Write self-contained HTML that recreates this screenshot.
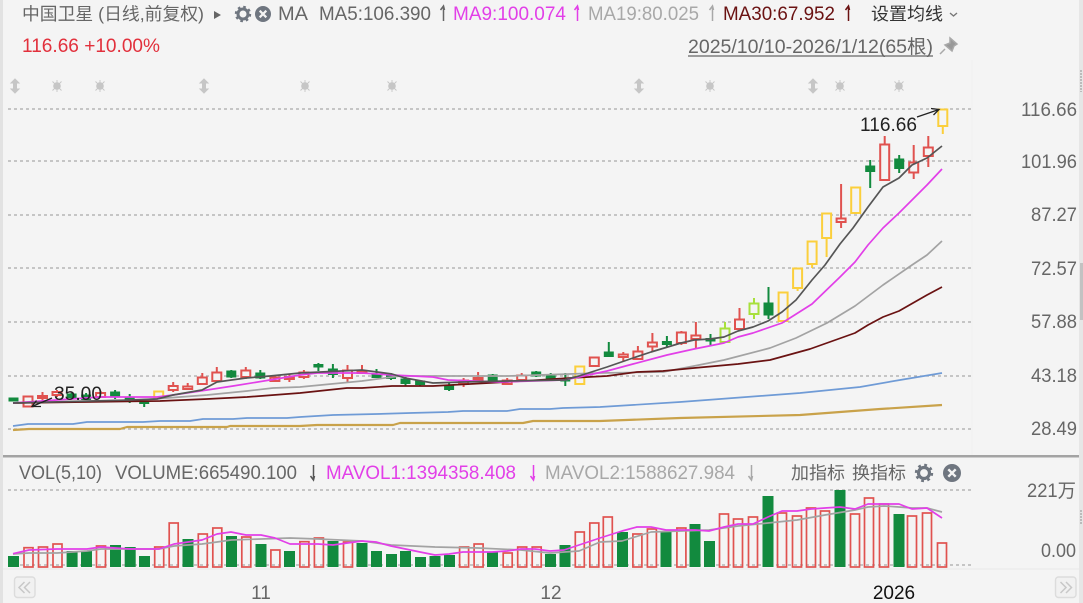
<!DOCTYPE html>
<html><head><meta charset="utf-8"><style>
html,body{margin:0;padding:0;width:1083px;height:603px;overflow:hidden;background:#f4f4f4}
svg{display:block}
text{font-family:"Liberation Sans","Noto Sans CJK SC",sans-serif;font-size:19px}
.cj{font-size:17.5px}
.g{fill:#128a3e;stroke:#128a3e;stroke-width:2}
.r{fill:#f4f4f4;stroke:#e0524f;stroke-width:2}
.y{fill:#f4f4f4;stroke:#fbcf3c;stroke-width:2}
.l{fill:#f4f4f4;stroke:#a8e03c;stroke-width:2}
.w{fill:none;stroke-width:2}
.ln{fill:none;stroke-width:1.700;stroke-linejoin:round}
.ax{fill:#666}
.ar{fill:none;stroke-width:1.500}
</style></head><body>
<svg width="1083" height="603" viewBox="0 0 1083 603" xmlns="http://www.w3.org/2000/svg">
<rect width="1083" height="603" fill="#f4f4f4"/>
<rect x="0" y="0" width="3" height="603" fill="#e2e2e2"/>
<rect x="1079" y="0" width="4" height="603" fill="#e6e6e6"/>
<rect x="1080" y="263" width="3" height="57" fill="#c2c2c2"/>
<path d="M1081 70v22M1081 510v14" stroke="#bbb" stroke-width="2" stroke-dasharray="2 1"/>
<path d="M972 60V455" stroke="#efefef"/>

<!-- grid -->
<g stroke="#a9a9a9" stroke-width="1.300" stroke-dasharray="3 3" fill="none">
<path d="M8 109H973M8 161H973M8 215H973M8 268H973M8 322H973M8 376H973M8 429H973M8 490H973M8 565H973"/>
</g>
<path d="M3 569H1079" stroke="#e8e8e8"/>
<rect x="3" y="455" width="1076" height="2.500" fill="#a3a3a3"/>

<!-- header -->
<text class="cj" x="22" y="20" fill="#666" textLength="182" lengthAdjust="spacingAndGlyphs">中国卫星 (日线,前复权)</text>
<path d="M214 11l7 4-7 4z" fill="#666"/>
<circle cx="243" cy="14" r="5" fill="none" stroke="#6f7680" stroke-width="3"/>
<circle cx="243" cy="14" r="7" fill="none" stroke="#6f7680" stroke-width="2.400" stroke-dasharray="2.600 2.900"/>
<circle cx="263" cy="14" r="8" fill="#6f7680"/>
<path d="M259.700 10.700l6.600 6.600M266.300 10.700l-6.600 6.600" stroke="#f4f4f4" stroke-width="2.200"/>
<text x="278" y="20" fill="#666" textLength="30" lengthAdjust="spacingAndGlyphs">MA</text>
<text x="319" y="20" fill="#666" textLength="112" lengthAdjust="spacingAndGlyphs">MA5:106.390</text>
<path class="ar" stroke="#666" d="M443.500 21V6M440.500 10l3-4 1 4"/>
<text x="453" y="20" fill="#e23fe8" textLength="113" lengthAdjust="spacingAndGlyphs">MA9:100.074</text>
<path class="ar" stroke="#e23fe8" d="M577.500 21V6M574.500 10l3-4 1 4"/>
<text x="588" y="20" fill="#a8a8a8" textLength="111" lengthAdjust="spacingAndGlyphs">MA19:80.025</text>
<path class="ar" stroke="#a8a8a8" d="M712.500 21V6M709.500 10l3-4 1 4"/>
<text x="723" y="20" fill="#6a1212" textLength="112" lengthAdjust="spacingAndGlyphs">MA30:67.952</text>
<path class="ar" stroke="#6a1212" d="M848.500 21V6M845.500 10l3-4 1 4"/>
<text class="cj" x="871" y="20" fill="#333" textLength="72" lengthAdjust="spacingAndGlyphs">设置均线</text>
<path d="M950 13l3.500 3 3.500-3" fill="none" stroke="#777" stroke-width="1.400"/>

<text x="22" y="52" fill="#e2303c" textLength="138" lengthAdjust="spacingAndGlyphs">116.66 +10.00%</text>
<text x="688" y="53" fill="#666" textLength="245" lengthAdjust="spacingAndGlyphs">2025/10/10-2026/1/12(65根)</text>
<path d="M688 56H933" stroke="#666" stroke-width="1.200"/>
<path d="M950 38l7 6-3 2-2 5-7-6 5-2zM945 49l-5 5" fill="#999" stroke="#a9a9a9" stroke-width="1.500"/>

<!-- markers -->
<g fill="#c6c6c6" stroke="#c6c6c6">
<path d="M15 79l4 4h-2.500v6h2.500l-4 4-4-4h2.500v-6h-2.500z"/>
<path d="M204 79l4 4h-2.500v6h2.500l-4 4-4-4h2.500v-6h-2.500z"/>
<path d="M639 79l4 4h-2.500v6h2.500l-4 4-4-4h2.500v-6h-2.500z"/>
<path d="M813 79l4 4h-2.500v6h2.500l-4 4-4-4h2.500v-6h-2.500z"/>
<g stroke="none">
<circle cx="57" cy="86" r="3.800"/><circle cx="100" cy="86" r="3.800"/><circle cx="305" cy="86" r="3.800"/><circle cx="392" cy="86" r="3.800"/><circle cx="710" cy="86" r="3.800"/><circle cx="840" cy="86" r="3.800"/><circle cx="899" cy="86" r="3.800"/>
</g>
<path fill="none" stroke-width="0.900" d="M52.500 81.500l9 9M61.500 81.500l-9 9M57 80v12M95.500 81.500l9 9M104.500 81.500l-9 9M100 80v12M300.500 81.500l9 9M309.500 81.500l-9 9M305 80v12M387.500 81.500l9 9M396.500 81.500l-9 9M392 80v12M705.500 81.500l9 9M714.500 81.500l-9 9M710 80v12M835.500 81.500l9 9M844.500 81.500l-9 9M840 80v12M894.500 81.500l9 9M903.500 81.500l-9 9M899 80v12"/>
</g>

<!-- wicks -->
<path class="w" stroke="#128a3e" d="M71.600 393v6M86.100 393v7M115.100 390v9M129.700 394v9M144.200 400v7M231.300 370v8M260.300 370v9M318.400 363v8M332.900 364v14M376.500 369v8M391 373v7M405.500 377v9M420.100 380v6M449.100 382v9M492.700 374v7M536.200 371v6M550.700 373v7M565.300 373v13M608.800 342v15M666.900 336v11M710.500 334v12M768.500 287v32M870.200 160v28M899.200 155v18"/>
<path class="w" stroke="#e0524f" d="M42.500 392v10M57 390v7M100.600 391v7M173.200 382v10M187.700 383v7M202.300 373v12M216.800 367v15M245.800 367v12M274.900 375v7M289.400 374v8M303.900 370v9M347.500 365v17M362 365v9M463.600 378v9M478.100 372v9M507.200 378v7M521.700 373v8M594.300 357v10M623.300 352v9M637.900 346v14M652.400 333v19M681.400 331v14M695.900 322v27M739.500 308v21M841.100 184v44M884.700 136v44M913.700 145v34M928.300 136v31"/>
<path class="w" stroke="#fbcf3c" d="M797.600 288v3M812.100 264v4M826.600 238v19M942.800 126v8"/>
<path class="w" stroke="#a8e03c" d="M725 322v20M754 298v21"/>

<!-- candle bodies -->
<g class="g">
<rect x="9.500" y="398.500" width="8" height="2"/><rect x="67.600" y="394.500" width="8" height="2.500"/><rect x="82.100" y="395.500" width="8" height="3.500"/><rect x="111.100" y="392.500" width="8" height="3.500"/><rect x="125.700" y="398" width="8" height="1"/><rect x="140.200" y="401.500" width="8" height="1.500"/><rect x="227.300" y="371.500" width="8" height="5"/><rect x="256.300" y="373.500" width="8" height="4"/><rect x="314.400" y="365" width="8" height="1.500"/><rect x="328.900" y="369.500" width="8" height="4.500"/><rect x="372.500" y="374.500" width="8" height="2.500"/><rect x="387" y="376.500" width="8" height="1.500"/><rect x="401.500" y="379.500" width="8" height="3.500"/><rect x="416.100" y="381.500" width="8" height="2.500"/><rect x="445.100" y="385.500" width="8" height="3.500"/><rect x="488.700" y="375.500" width="8" height="4.500"/><rect x="532.200" y="372.500" width="8" height="3"/><rect x="546.700" y="376.500" width="8" height="2"/><rect x="561.300" y="379" width="8" height="1.500"/><rect x="604.800" y="352.500" width="8" height="3.500"/><rect x="662.900" y="342" width="8" height="2"/><rect x="706.500" y="339" width="8" height="1.500"/><rect x="764.500" y="303.500" width="8" height="11"/><rect x="866.200" y="166.500" width="8" height="4.500"/><rect x="895.200" y="159.500" width="8" height="8.500"/>
</g>
<g class="r">
<rect x="23.500" y="396.500" width="9" height="10"/><rect x="38" y="396" width="9" height="2"/><rect x="52.500" y="392" width="9" height="3"/><rect x="96.100" y="393" width="9" height="4"/><rect x="168.700" y="386" width="9" height="4"/><rect x="183.200" y="386.500" width="9" height="2.500"/><rect x="197.800" y="377.500" width="9" height="6.500"/><rect x="212.300" y="372.500" width="9" height="8.500"/><rect x="241.300" y="370.500" width="9" height="6.500"/><rect x="270.400" y="377.500" width="9" height="3.500"/><rect x="284.900" y="377" width="9" height="2"/><rect x="299.400" y="372.500" width="9" height="4.500"/><rect x="343" y="370.500" width="9" height="7.500"/><rect x="357.500" y="371" width="9" height="2"/><rect x="459.100" y="380.500" width="9" height="3.500"/><rect x="473.600" y="378" width="9" height="2"/><rect x="502.700" y="380.500" width="9" height="3.500"/><rect x="517.200" y="375.500" width="9" height="4.500"/><rect x="589.800" y="357.500" width="9" height="8.500"/><rect x="618.800" y="354.500" width="9" height="2.500"/><rect x="633.400" y="351.500" width="9" height="7.500"/><rect x="647.900" y="342.500" width="9" height="4"/><rect x="676.900" y="332.500" width="9" height="10.500"/><rect x="691.400" y="335.500" width="9" height="3.500"/><rect x="735" y="319.500" width="9" height="9.500"/><rect x="836.600" y="218.500" width="9" height="3.500"/><rect x="880.200" y="144.500" width="9" height="35.500"/><rect x="909.200" y="162.500" width="9" height="10"/><rect x="923.800" y="147.500" width="9" height="8.500"/>
</g>
<g class="y">
<rect x="154.200" y="391.500" width="9" height="6.500"/><rect x="575.300" y="366.500" width="9" height="17.500"/><rect x="778.600" y="292.500" width="9" height="28.500"/><rect x="793.100" y="268.500" width="9" height="19.500"/><rect x="807.600" y="241.500" width="9" height="22.500"/><rect x="822.100" y="213.500" width="9" height="24.500"/><rect x="851.200" y="187.500" width="9" height="25.500"/><rect x="938.300" y="109.500" width="9" height="16.500"/>
</g>
<g class="l">
<rect x="720.500" y="328.500" width="9" height="13.500"/><rect x="749.500" y="303.500" width="9" height="10.500"/>
</g>

<!-- MA lines -->
<path class="ln" style="stroke:#c9a24a;stroke-width:2.200" d="M13 430L29 429L120 429L127 427L227 427L230 426L300 426L317 425L393 425L400 423L523 423L533 421L600 421L680 418L800 415L880 409L942 405"/>
<path class="ln" style="stroke:#6f9bd6" d="M13 426L28 424L73 424L87 422L143 422L160 421L190 421L203 419L233 419L247 418L287 418L300 417L333 415L377 414L410 413L448 412L463 411L507 411L520 409L550 409L563 408L600 407L680 402L720 399L800 393L860 387L900 380L942 373"/>
<path class="ln" style="stroke:#a3a3a3" d="M13 403L140 400L207 395L247 391L273 388L300 387L362 381L400 376L507 376L600 373L663 372L694 366L724 360L770 348L796 338L827 323L855 306L883 285L912 265L927 255L942 241"/>
<path class="ln" style="stroke:#6a1212" d="M13 403L160 401L207 399L247 397L300 393L347 388L362 388L392 386L433 386L507 382L570 378L607 376L637 372L663 371L694 368L738 364L770 360L810 349L855 333L868 325L883 317L899 311L927 295L942 287"/>
<path class="ln" style="stroke:#e23fe8" d="M13 403L100 397L157 397L173 395L207 390L233 386L270 380L300 375L317 373L362 373L392 375L433 377L448 380L500 382L564 380L579 377L607 371L633 364L667 355L694 349L724 343L738 337L753 333L782 323L812 304L840 277L855 262L868 245L883 228L899 213L927 185L942 169"/>
<path class="ln" style="stroke:#555" d="M13 403L130 400L157 399L173 395L202 390L217 382L246 378L270 376L300 373L362 370L392 374L405 378L433 383L463 382L507 381L564 380L579 376L607 367L633 358L651 352L681 343L694 340L710 339L724 337L738 331L753 327L768 321L782 312L796 300L812 280L825 265L840 244L853 228L868 207L883 187L899 178L912 165L927 158L942 146"/>

<!-- annotations -->
<text x="860" y="131" fill="#222" textLength="57" lengthAdjust="spacingAndGlyphs">116.66</text>
<path d="M917 117L939 109.500M931 108.500l8 1-5.500 5.500" fill="none" stroke="#222" stroke-width="1.300"/>
<text x="54" y="400" fill="#222" textLength="48" lengthAdjust="spacingAndGlyphs">35.00</text>
<path d="M52 398L32 406.500M41 406.500l-9 0 4.500-6" fill="none" stroke="#222" stroke-width="1.300"/>

<!-- axis -->
<g class="ax">
<text x="1021" y="116" textLength="56" lengthAdjust="spacingAndGlyphs">116.66</text>
<text x="1021" y="168" textLength="56" lengthAdjust="spacingAndGlyphs">101.96</text>
<text x="1031" y="221" textLength="46" lengthAdjust="spacingAndGlyphs">87.27</text>
<text x="1031" y="275" textLength="46" lengthAdjust="spacingAndGlyphs">72.57</text>
<text x="1031" y="328" textLength="46" lengthAdjust="spacingAndGlyphs">57.88</text>
<text x="1031" y="382" textLength="46" lengthAdjust="spacingAndGlyphs">43.18</text>
<text x="1031" y="435" textLength="46" lengthAdjust="spacingAndGlyphs">28.49</text>
<text x="1027" y="497" textLength="49" lengthAdjust="spacingAndGlyphs">221万</text>
<text x="1041" y="557" textLength="35" lengthAdjust="spacingAndGlyphs">0.00</text>
</g>

<!-- volume header -->
<text x="19" y="479" fill="#666" textLength="83" lengthAdjust="spacingAndGlyphs">VOL(5,10)</text>
<text x="115" y="479" fill="#666" textLength="182" lengthAdjust="spacingAndGlyphs">VOLUME:665490.100</text>
<path class="ar" stroke="#555" d="M313.500 465V480M310.500 476l3 4 1-4"/>
<text x="326" y="479" fill="#e23fe8" textLength="190" lengthAdjust="spacingAndGlyphs">MAVOL1:1394358.408</text>
<path class="ar" stroke="#e23fe8" d="M533.500 465V480M530.500 476l3 4 1-4"/>
<text x="545" y="479" fill="#a8a8a8" textLength="190" lengthAdjust="spacingAndGlyphs">MAVOL2:1588627.984</text>
<path class="ar" stroke="#a8a8a8" d="M751.500 465V480M748.500 476l3 4 1-4"/>
<text class="cj" x="791" y="479" fill="#666" textLength="54" lengthAdjust="spacingAndGlyphs">加指标</text>
<text class="cj" x="852" y="479" fill="#666" textLength="54" lengthAdjust="spacingAndGlyphs">换指标</text>
<circle cx="924" cy="473" r="5.500" fill="none" stroke="#6f7680" stroke-width="3.200"/>
<circle cx="924" cy="473" r="8" fill="none" stroke="#6f7680" stroke-width="2.400" stroke-dasharray="2.800 3.480"/>
<circle cx="952" cy="473" r="9" fill="#6f7680"/>
<path d="M948.300 469.300l7.400 7.400M955.700 469.300l-7.400 7.400" stroke="#f4f4f4" stroke-width="2.400"/>

<!-- volume bars -->
<g fill="#128a3e">
<rect x="8" y="556" width="11" height="11"/><rect x="66.600" y="551" width="11" height="16"/><rect x="81" y="551" width="11" height="16"/><rect x="110" y="545" width="11" height="22"/><rect x="124.700" y="547" width="11" height="20"/><rect x="139" y="556" width="11" height="11"/><rect x="182.500" y="539" width="11" height="28"/><rect x="226" y="536" width="11" height="31"/><rect x="255.500" y="544" width="11" height="23"/><rect x="284" y="551" width="11" height="16"/><rect x="327.500" y="541" width="11" height="26"/><rect x="356.500" y="543" width="11" height="24"/><rect x="371" y="551" width="11" height="16"/><rect x="386" y="554" width="11" height="13"/><rect x="400" y="551" width="11" height="16"/><rect x="415" y="557" width="11" height="10"/><rect x="429.500" y="556" width="11" height="11"/><rect x="444" y="555" width="11" height="12"/><rect x="487" y="552" width="11" height="15"/><rect x="545" y="554" width="11" height="13"/><rect x="559.500" y="545" width="11" height="22"/><rect x="617" y="532" width="11" height="35"/><rect x="660.500" y="531" width="11" height="36"/><rect x="689.500" y="524" width="11" height="43"/><rect x="704" y="541" width="11" height="26"/><rect x="762.500" y="496" width="11" height="71"/><rect x="834.500" y="490" width="11" height="77"/><rect x="893.500" y="514" width="11" height="53"/>
</g>
<g fill="none" stroke="#e0524f" stroke-width="1.700">
<rect x="24" y="547.700" width="9" height="19.300"/><rect x="38.500" y="547" width="9" height="20"/><rect x="53" y="544" width="9" height="23"/><rect x="96.500" y="546" width="9" height="21"/><rect x="154.700" y="547" width="9" height="20"/><rect x="169.200" y="523" width="9" height="44"/><rect x="198.300" y="534" width="9" height="33"/><rect x="212.800" y="528" width="9" height="39"/><rect x="241.800" y="537" width="9" height="30"/><rect x="270.900" y="550" width="9" height="17"/><rect x="299.900" y="541.700" width="9" height="25.300"/><rect x="314.400" y="538" width="9" height="29"/><rect x="343.500" y="542" width="9" height="25"/><rect x="459.600" y="547" width="9" height="20"/><rect x="474.100" y="544" width="9" height="23"/><rect x="503.200" y="553" width="9" height="14"/><rect x="517.700" y="547" width="9" height="20"/><rect x="532.200" y="547" width="9" height="20"/><rect x="575.300" y="532" width="9" height="35"/><rect x="589.800" y="523" width="9" height="44"/><rect x="603.300" y="517" width="9" height="50"/><rect x="632.900" y="534" width="9" height="33"/><rect x="647.400" y="529" width="9" height="38"/><rect x="676.900" y="528" width="9" height="39"/><rect x="719.500" y="514" width="9" height="53"/><rect x="733.500" y="519" width="9" height="48"/><rect x="748.500" y="517" width="9" height="50"/><rect x="777.500" y="513" width="9" height="54"/><rect x="792.500" y="516" width="9" height="51"/><rect x="806.500" y="508" width="9" height="59"/><rect x="820.500" y="511" width="9" height="56"/><rect x="850.500" y="514" width="9" height="53"/><rect x="864.500" y="498" width="9" height="69"/><rect x="879.500" y="504" width="9" height="63"/><rect x="907.500" y="516" width="9" height="51"/><rect x="922.500" y="513" width="9" height="54"/><rect x="937.500" y="543" width="9" height="24"/>
</g>
<path class="ln" style="stroke:#a3a3a3" d="M13 554L29 553L57 553L87 551L101 549L131 549L159 549L174 546L202 544L217 542L231 540L261 539L290 538L318 539L362 541L391 545L435 547L478 548L521 550L550 553L579 551L600 542L622 541L651 532L681 531L709 530L738 526L768 523L797 520L825 515L855 510L868 507L884 506L899 507L912 508L927 508L942 512"/>
<path class="ln" style="stroke:#e23fe8" d="M13 553.700L29 550L57 549L87 549L101 547L131 549L159 549L174 544L202 540L217 534L231 532L246 535L261 535L275 538L290 544L318 544L333 545L362 541L376 542L391 546L420 552L435 555L449 554L463 552L492 552L507 551L521 549L535 549L550 551L564 550L579 545L594 540L600 538L622 531L637 527L651 527L666 530L695 530L709 531L724 527L738 524L753 524L768 517L782 511L797 511L811 509L825 508L840 507L855 509L868 504L899 504L912 509L927 508L942 518"/>

<!-- x axis -->
<text x="261" y="599" fill="#666" text-anchor="middle">11</text>
<text x="551" y="599" fill="#666" text-anchor="middle">12</text>
<text x="894" y="599" fill="#111" text-anchor="middle">2026</text>

<!-- nav buttons -->
<rect x="14.500" y="577" width="20.500" height="20.500" rx="3" fill="#f1f1f1" stroke="#dcdcdc" stroke-width="1.400"/>
<path d="M24.500 582l-5.500 5.500 5.500 5.500M30 582l-5.500 5.500 5.500 5.500" fill="none" stroke="#c8c8c8" stroke-width="1.500"/>
<rect x="1055.500" y="577" width="20.500" height="20.500" rx="3" fill="#f1f1f1" stroke="#dcdcdc" stroke-width="1.400"/>
<path d="M1060.500 582l5.500 5.500-5.500 5.500M1066 582l5.500 5.500-5.500 5.500" fill="none" stroke="#c8c8c8" stroke-width="1.500"/>
</svg>
</body></html>
